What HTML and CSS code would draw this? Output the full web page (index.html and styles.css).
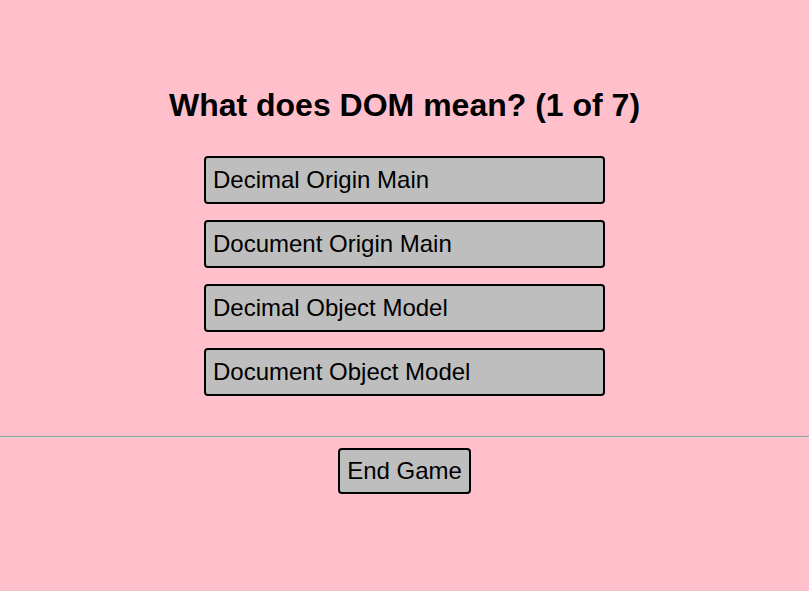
FILE: index.html
```html
<!DOCTYPE html>
<html>
<head>
<meta charset="utf-8">
<link rel="stylesheet" href="styles.css">
</head>
<body>
<main class="quiz">
  <h1 class="question">What does DOM mean? (1 of 7)</h1>
  <div class="answers">
    <button class="answer">Decimal Origin Main</button>
    <button class="answer">Document Origin Main</button>
    <button class="answer">Decimal Object Model</button>
    <button class="answer">Document Object Model</button>
  </div>
</main>
<hr class="divider">
<div class="controls">
  <button class="end">End Game</button>
</div>
</body>
</html>
```
FILE: styles.css
```css
html, body {
  margin: 0;
  padding: 0;
}
body {
  background: #ffc0cb;
  font-family: "Liberation Sans", Arial, sans-serif;
  color: #000;
}
.quiz {
  padding-top: 87px;
  display: flex;
  flex-direction: column;
  align-items: center;
}
.question {
  margin: 0;
  font-size: 32px;
  font-weight: bold;
  line-height: 36px;
}
.answers {
  margin-top: 33px;
  display: flex;
  flex-direction: column;
  gap: 16px;
}
.answer {
  box-sizing: border-box;
  width: 401px;
  height: 48px;
  background: #bebebe;
  border: 2px solid #000;
  border-radius: 4px;
  font-family: "Liberation Sans", Arial, sans-serif;
  font-size: 24px;
  text-align: left;
  padding: 0 7px;
  color: #000;
}
.divider {
  margin: 40px 0 0;
  border: 0;
  border-top: 1px solid #9a9a9a;
  border-bottom: 1px solid #d8d8d8;
  height: 0;
}
.controls {
  display: flex;
  justify-content: center;
  margin-top: 10px;
}
.end {
  box-sizing: border-box;
  height: 46px;
  background: #bebebe;
  border: 2px solid #000;
  border-radius: 4px;
  font-family: "Liberation Sans", Arial, sans-serif;
  font-size: 24px;
  padding: 0 7px;
  color: #000;
}
```
